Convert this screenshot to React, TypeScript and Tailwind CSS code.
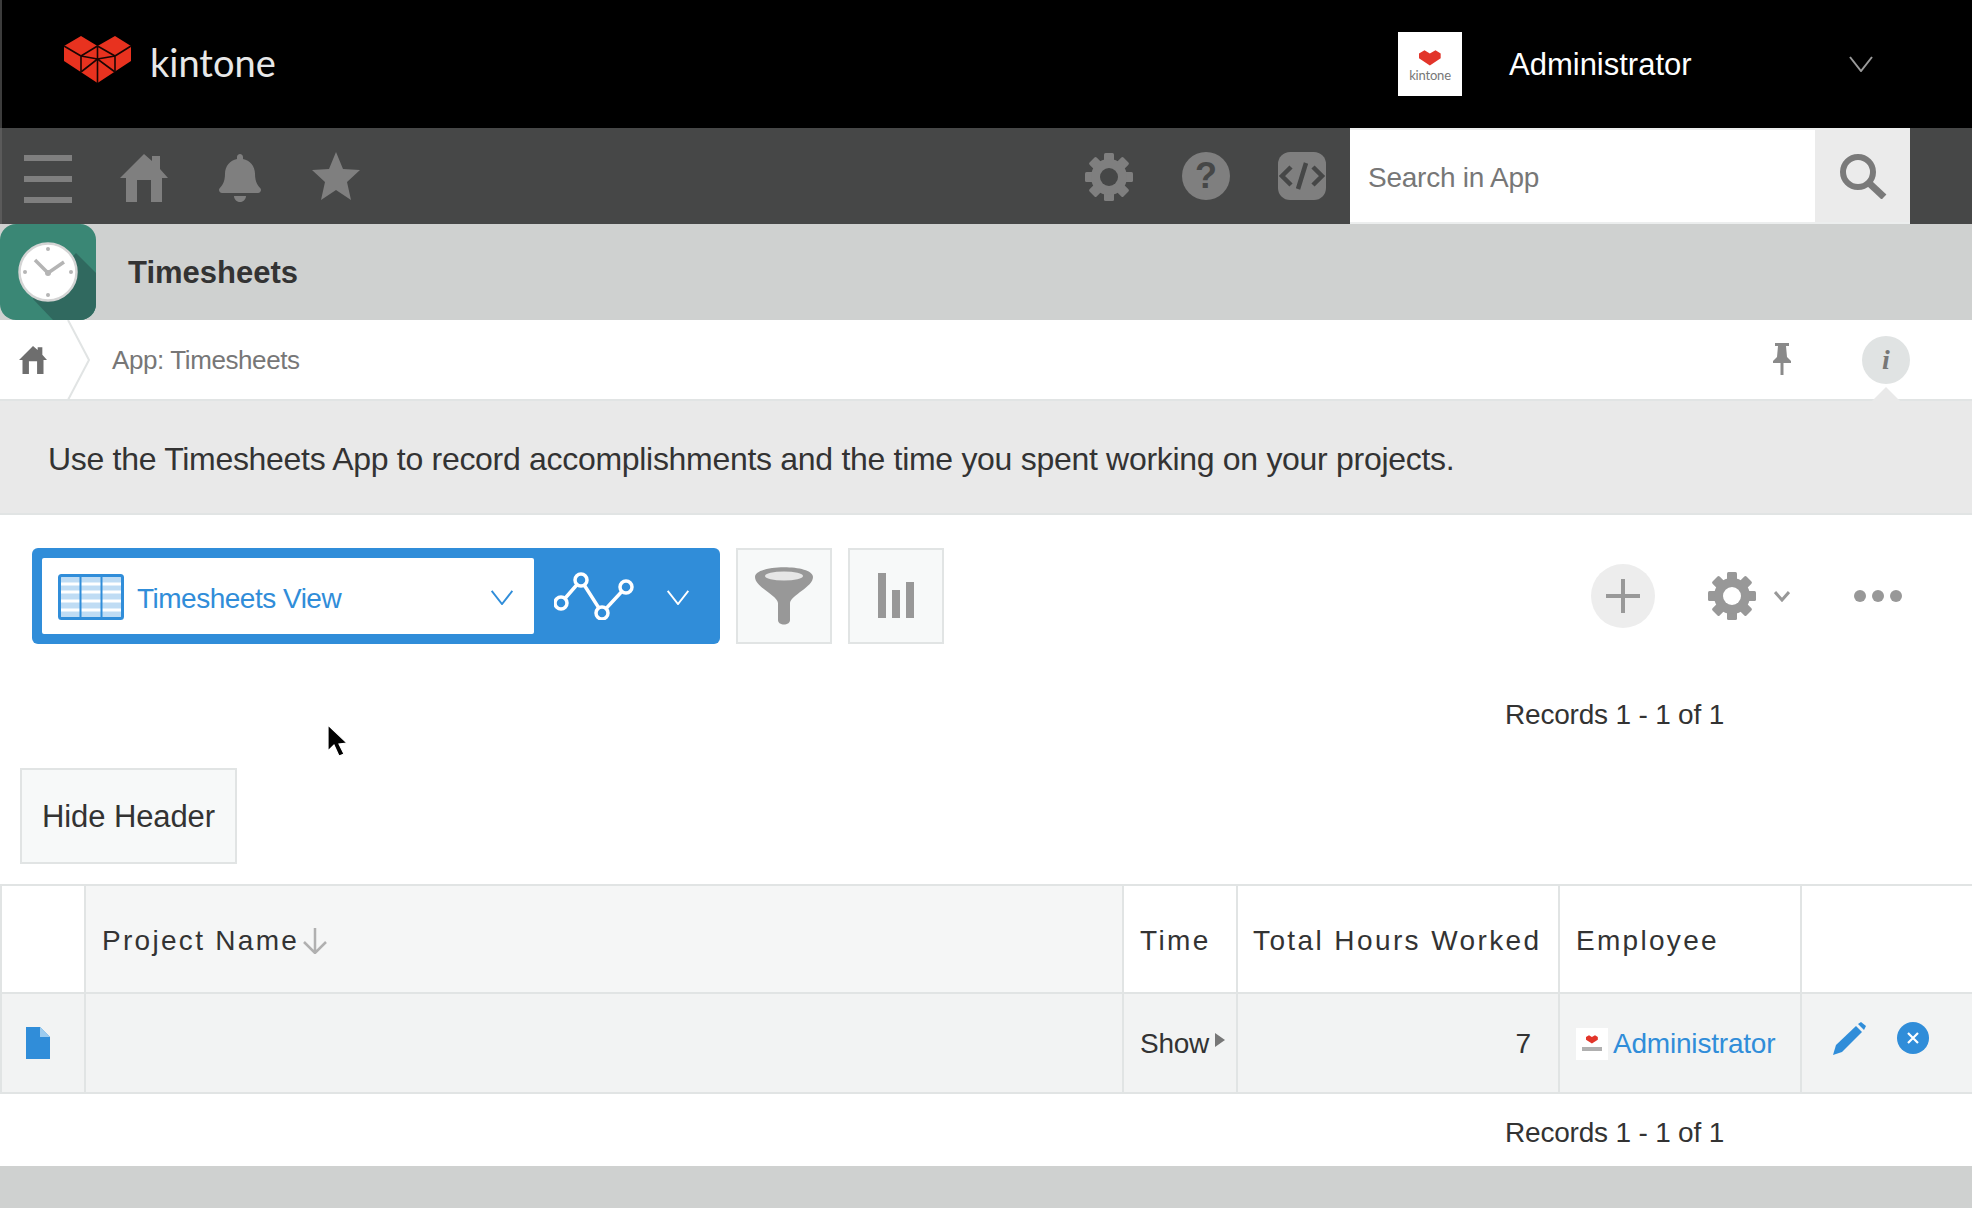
import { FaBell } from "react-icons/fa";

const sans = "font-['Liberation_Sans',Arial,sans-serif]";

function Gear({ size, color, hole }: { size: number; color: string; hole: string }) {
    return (
        <svg width={size} height={size} viewBox="0 0 48 48">
            {[0, 45, 90, 135].map((a) => (
                <rect key={a} x="19" y="0" width="10" height="48" rx="1.5" fill={color} transform={`rotate(${a} 24 24)`} />
            ))}
            <circle cx="24" cy="24" r="18" fill={color} />
            <circle cx="24" cy="24" r="9" fill={hole} />
        </svg>
    );
}

function Chevron({ w, h, color, sw = 2 }: { w: number; h: number; color: string; sw?: number }) {
    return (
        <svg width={w} height={h} viewBox="0 0 24 16">
            <path d="M1 1 L12 15 L23 1" fill="none" stroke={color} strokeWidth={sw} />
        </svg>
    );
}

function KintoneLogo() {
    return (
        <svg width="68" height="48" viewBox="0 0 68 48">
            <polygon points="17,0 33.5,10 51,0 67,10 67,25 33.5,47 0,25 0,10" fill="#e8321f" />
            <g stroke="#1a0503" strokeWidth="1.6" fill="none">
                <path d="M0 10 L17 20 L33.5 10 M17 20 V36 M33.5 10 L51 20 L67 10 M51 20 V36 M33.5 10 V47" />
                <path d="M17 36 L33.5 23 L51 36 M17 20 L33.5 23 L51 20" />
            </g>
        </svg>
    );
}

function Avatar() {
    return (
        <div className="w-[64px] h-[64px] bg-white flex flex-col items-center pt-[18px]">
            <svg width="22" height="16" viewBox="0 0 68 48">
                <polygon points="17,0 33.5,10 51,0 67,10 67,25 33.5,47 0,25 0,10" fill="#e2352a" />
            </svg>
            <span className="font-['Lato',sans-serif] text-[13px] leading-[13px] mt-[3px] text-[#777] tracking-[-0.2px]">kintone</span>
        </div>
    );
}

function ClockIcon() {
    return (
        <div className="w-[96px] h-[96px] shrink-0 rounded-[16px] overflow-hidden bg-[#3a8775]">
            <svg width="96" height="96" viewBox="0 0 96 96">
                <polygon points="76,29 96,49 96,96 53,96 33,75" fill="#30695f" />
                <circle cx="48" cy="48" r="28.5" fill="#ffffff" stroke="#d4d4d4" strokeWidth="2.5" />
                {[0, 90, 180, 270].map((a) => (
                    <circle key={a} cx="48" cy="25" r="2" fill="#b5b5b5" transform={`rotate(${a} 48 48)`} />
                ))}
                <path d="M35 36 L48 49 L64 38" fill="none" stroke="#b4b4b4" strokeWidth="3.5" />
                <circle cx="48" cy="49" r="3" fill="#b4b4b4" />
            </svg>
        </div>
    );
}

export default function App() {
    return (
        <div className={`relative w-[1972px] h-[1208px] overflow-hidden bg-white text-[#333] ${sans}`}>
            {/* black top bar */}
            <header className="h-[128px] bg-black border-l-2 border-[#3c3c3c] flex items-center">
                <div className="ml-[62px] flex items-center gap-[18px] mt-[-8px]">
                    <KintoneLogo />
                    <span className="font-['Lato',sans-serif] text-[38px] mt-[3px] text-[#e8e8e8] leading-none">kintone</span>
                </div>
                <div className="ml-auto flex items-center mr-[99px]">
                    <Avatar />
                    <span className="ml-[47px] w-[340px] text-[31px] leading-none text-white">Administrator</span>
                    <Chevron w={24} h={16} color="#9a9a9a" />
                </div>
            </header>

            {/* global nav */}
            <nav className="h-[96px] bg-[#464747] border-l-2 border-[#5a5a5a] flex items-center">
                <div className="ml-[22px] flex flex-col gap-[15px] w-[48px] mt-[6px]">
                    <div className="h-[6px] bg-[#7f7f7f]" />
                    <div className="h-[6px] bg-[#7f7f7f]" />
                    <div className="h-[6px] bg-[#7f7f7f]" />
                </div>
                <svg width="48" height="48" viewBox="0 0 48 48" className="ml-[48px] mt-[4px]">
                    <path d="M24 0 L32 7 V2 H40 V15 L48 24 H42 V48 H31 V26 H17 V48 H6 V24 H0 Z" fill="#7f7f7f" />
                </svg>
                <FaBell size={48} color="#7f7f7f" className="ml-[48px] mt-[4px]" />
                <svg width="48" height="48" viewBox="0 0 48 48" className="ml-[48px] mt-[-1px]">
                    <polygon points="24,0 31,17 48,18 35,30 39,48 24,38 9,48 13,30 0,18 17,17" fill="#7f7f7f" />
                </svg>
                <div className="ml-auto flex items-center">
                    <div className="mt-[1px]"><Gear size={48} color="#7f7f7f" hole="#464747" /></div>
                    <div className="ml-[49px] w-[48px] h-[48px] rounded-full bg-[#7f7f7f] text-[#464747] text-[36px] font-bold flex items-center justify-center leading-none">?</div>
                    <svg width="48" height="48" viewBox="0 0 48 48" className="ml-[48px] rounded-[12px] bg-[#7f7f7f]">
                        <path d="M13 15 L4 24 L13 33 M35 15 L44 24 L35 33 M28 11 L20 37" fill="none" stroke="#464747" strokeWidth="4.5" />
                    </svg>
                    <div className="ml-[24px] w-[560px] h-[96px] flex border-t-2 border-b-2 border-[#eceeee] mr-[62px]">
                        <div className="w-[465px] bg-white flex items-center pl-[18px] pt-[3px] text-[28px] tracking-[-0.25px] text-[#777]">Search in App</div>
                        <div className="flex-1 bg-[#ebebeb] flex items-center justify-center">
                            <svg width="48" height="46" viewBox="0 0 48 46">
                                <circle cx="19" cy="19" r="15" fill="none" stroke="#7a7a7a" strokeWidth="6" />
                                <path d="M30 30 L45 44" stroke="#7a7a7a" strokeWidth="7" />
                            </svg>
                        </div>
                    </div>
                </div>
            </nav>

            {/* app title */}
            <div className="h-[96px] bg-[#cfd1d0] flex items-center">
                <ClockIcon />
                <span className="ml-[32px] pt-[3px] text-[31px] font-bold text-[#333]">Timesheets</span>
            </div>

            {/* breadcrumb */}
            <div className="relative h-[81px] bg-white border-b-2 border-[#e1e4e4] flex items-center">
                <svg width="28" height="28" viewBox="0 0 48 48" className="ml-[19px]">
                    <path d="M24 0 L32 7 V2 H40 V15 L48 24 H42 V48 H31 V26 H17 V48 H6 V24 H0 Z" fill="#6e6e6e" />
                </svg>
                <svg width="24" height="80" viewBox="0 0 24 80" className="ml-[20px]">
                    <path d="M1 0 L22 40 L1 80" fill="none" stroke="#e1e4e4" strokeWidth="2" />
                </svg>
                <span className="ml-[21px] pt-[2px] text-[26px] tracking-[-0.4px] text-[#777]">App: Timesheets</span>
                <svg width="18" height="32" viewBox="0 0 18 32" className="ml-auto mb-[2px]">
                    <path d="M2 0 H16 V3 H13 L14 14 L18 18 V20 H0 V18 L4 14 L5 3 H2 Z" fill="#8a8a8a" />
                    <path d="M9 20 V32" stroke="#8a8a8a" strokeWidth="3" />
                </svg>
                <div className="ml-[71px] mr-[62px] w-[48px] h-[48px] rounded-full bg-[#e0e3e3] flex items-center justify-center font-['Liberation_Serif',serif] italic font-bold text-[28px] text-[#777]">i</div>
                <div className="absolute right-[72px] bottom-[-2px] w-0 h-0 border-x-[14px] border-x-transparent border-b-[14px] border-b-[#e9e9e9]" />
            </div>

            {/* description */}
            <div className="h-[114px] bg-[#e9e9e9] border-b-2 border-[#e1e4e4] flex items-center pl-[48px] pt-[4px] text-[32px] tracking-[-0.3px] text-[#333]">
                Use the Timesheets App to record accomplishments and the time you spent working on your projects.
            </div>

            {/* toolbar */}
            <div className="h-[96px] mt-[33px] flex items-stretch pl-[32px] pr-[70px]">
                <div className="w-[688px] bg-[#308dd9] rounded-[6px] flex items-center pl-[10px]">
                    <div className="w-[492px] h-[76px] bg-white rounded-[2px] flex items-center pl-[16px] pr-[20px]">
                        <svg width="66" height="46" viewBox="0 0 66 46" className="mt-[2px]">
                            <rect x="1.5" y="1.5" width="63" height="43" rx="2" fill="#bfdcf4" stroke="#308dd9" strokeWidth="3" />
                            <path d="M3 10 H63 M3 18 H63 M3 27 H63 M3 36 H63" stroke="#ffffff" strokeWidth="3" />
                            <path d="M22.5 3 V43 M43.5 3 V43" stroke="#308dd9" strokeWidth="2" />
                        </svg>
                        <span className="ml-[13px] pt-[5px] text-[28px] tracking-[-0.5px] text-[#308dd9]">Timesheets View</span>
                        <div className="ml-auto mt-[3px]"><Chevron w={24} h={15} color="#308dd9" /></div>
                    </div>
                    <svg width="80" height="48" viewBox="0 0 80 48" className="ml-[20px]">
                        <path d="M7 31 L27 8 L48 41 L72 15" fill="none" stroke="#ffffff" strokeWidth="3.5" />
                        {[[7, 31], [27, 8], [48, 41], [72, 15]].map(([cx, cy]) => (
                            <circle key={cx} cx={cx} cy={cy} r="6" fill="#308dd9" stroke="#ffffff" strokeWidth="3.5" />
                        ))}
                    </svg>
                    <div className="ml-[31px] mt-[3px]"><Chevron w={26} h={15} color="#ffffff" /></div>
                </div>
                <div className="ml-[16px] w-[96px] bg-[#f7f9f9] border-2 border-[#e1e4e4] flex items-center justify-center">
                    <svg width="58" height="58" viewBox="0 0 58 58">
                        <path d="M0 10 C0 -3 58 -3 58 10 C58 20 36 28 35 36 V53 C35 59 23 59 23 53 V36 C22 28 0 20 0 10 Z" fill="#989898" />
                        <ellipse cx="29" cy="9" rx="19" ry="4.5" fill="#e6e6e6" />
                    </svg>
                </div>
                <div className="ml-[16px] w-[96px] bg-[#f7f9f9] border-2 border-[#e1e4e4] flex items-end justify-center pb-[24px] gap-[6px]">
                    <div className="w-[8px] h-[45px] bg-[#989898]" />
                    <div className="w-[8px] h-[28px] bg-[#989898]" />
                    <div className="w-[8px] h-[36px] bg-[#989898]" />
                </div>
                <div className="ml-auto flex items-center">
                    <div className="w-[64px] h-[64px] rounded-full bg-[#ededed] flex items-center justify-center">
                        <svg width="34" height="34" viewBox="0 0 34 34">
                            <path d="M17 0 V34 M0 17 H34" stroke="#999" strokeWidth="4" />
                        </svg>
                    </div>
                    <div className="ml-[53px]"><Gear size={48} color="#989898" hole="#ffffff" /></div>
                    <div className="ml-[18px]">
                        <svg width="16" height="12" viewBox="0 0 16 12">
                            <path d="M1 2 L8 10 L15 2" fill="none" stroke="#989898" strokeWidth="3" />
                        </svg>
                    </div>
                    <div className="ml-[64px] flex gap-[6px]">
                        <div className="w-[12px] h-[12px] rounded-full bg-[#989898]" />
                        <div className="w-[12px] h-[12px] rounded-full bg-[#989898]" />
                        <div className="w-[12px] h-[12px] rounded-full bg-[#989898]" />
                    </div>
                </div>
            </div>

            {/* pager */}
            <div className="h-[124px] flex items-center pr-[248px] pt-[18px] justify-end text-[28px] tracking-[-0.2px]">
                Records 1 - 1 of 1
            </div>

            <div className="pl-[20px] h-[116px]">
                <button className="w-[217px] h-[96px] pt-[3px] bg-[#f7f9f9] border-2 border-[#e1e4e4] text-[31px] tracking-[-0.1px] text-[#333]">Hide Header</button>
            </div>

            {/* table */}
            <div className="grid grid-cols-[86px_1038px_114px_322px_242px_1fr] border-y-2 border-[#e1e4e4] text-[28px]">
                <div className="h-[106px] bg-white border-l-2 border-r-2 border-[#e1e4e4]" />
                <div className="h-[106px] bg-[#f5f6f6] border-r-2 border-[#e1e4e4] flex items-center pl-[16px] pt-[4px] tracking-[2.3px]">
                    Project Name
                    <svg width="24" height="26" viewBox="0 0 24 26" className="ml-[4px]">
                        <path d="M12 0 V25 M1 14 L12 25 L23 14" fill="none" stroke="#b0b0b0" strokeWidth="2.5" />
                    </svg>
                </div>
                <div className="h-[106px] border-r-2 border-[#e1e4e4] flex items-center pl-[16px] pt-[4px] tracking-[2.4px]">Time</div>
                <div className="h-[106px] border-r-2 border-[#e1e4e4] flex items-center pl-[15px] pt-[4px] tracking-[2.4px] whitespace-nowrap">Total Hours Worked</div>
                <div className="h-[106px] border-r-2 border-[#e1e4e4] flex items-center pl-[16px] pt-[4px] tracking-[2.3px]">Employee</div>
                <div className="h-[106px]" />

                <div className="col-span-6 h-[2px] bg-[#e1e4e4]" />

                <div className="h-[98px] bg-[#f2f3f3] border-l-2 border-r-2 border-[#e1e4e4] flex items-center pl-[24px]">
                    <svg width="24" height="32" viewBox="0 0 24 32">
                        <path d="M0 0 H14 L24 10 V32 H0 Z" fill="#308dd9" />
                        <path d="M14 0 L24 10 H14 Z" fill="#9ccbef" />
                    </svg>
                </div>
                <div className="h-[98px] bg-[#f2f3f3] border-r-2 border-[#e1e4e4]" />
                <div className="h-[98px] bg-[#f2f3f3] border-r-2 border-[#e1e4e4] flex items-center pl-[16px] pt-[2px] tracking-[-0.3px]">
                    Show
                    <div className="ml-[6px] mb-[8px] w-0 h-0 border-y-[7px] border-y-transparent border-l-[10px] border-l-[#777]" />
                </div>
                <div className="h-[98px] bg-[#f2f3f3] border-r-2 border-[#e1e4e4] flex items-center justify-end pr-[27px] pt-[2px]">7</div>
                <div className="h-[98px] bg-[#f2f3f3] border-r-2 border-[#e1e4e4] flex items-center pl-[16px] pt-[2px] text-[#308dd9] tracking-[-0.2px]">
                    <div className="w-[32px] h-[32px] bg-white flex flex-col items-center pt-[7px]">
                        <svg width="12" height="9" viewBox="0 0 68 48">
                            <polygon points="17,0 33.5,10 51,0 67,10 67,25 33.5,47 0,25 0,10" fill="#e2352a" />
                        </svg>
                        <div className="mt-[3px] w-[20px] h-[4px] bg-[#b0b0b0]" />
                    </div>
                    <span className="ml-[5px]">Administrator</span>
                </div>
                <div className="h-[98px] bg-[#f2f3f3] flex items-start pt-[28px] pl-[31px]">
                    <svg width="33" height="33" viewBox="0 0 33 33">
                        <path d="M0 33 L3 23 L23 4 L29 10 L9 30 Z" fill="#308dd9" />
                        <path d="M25 2 L28 0 L33 4 L31 8 Z" fill="#308dd9" />
                    </svg>
                    <div className="ml-[31px] w-[32px] h-[32px] rounded-full bg-[#308dd9] flex items-center justify-center">
                        <svg width="14" height="14" viewBox="0 0 14 14">
                            <path d="M2 2 L12 12 M12 2 L2 12" stroke="#fff" strokeWidth="2.2" />
                        </svg>
                    </div>
                </div>
            </div>

            {/* pager bottom */}
            <div className="h-[72px] flex items-center pr-[248px] pt-[6px] justify-end text-[28px] tracking-[-0.2px]">
                Records 1 - 1 of 1
            </div>
            <div className="h-[42px] bg-[#cfd1d0]" />

            {/* mouse cursor */}
            <svg width="22" height="34" viewBox="0 0 22 34" className="absolute left-[327px] top-[724px]">
                <path d="M1 1 V27 L7 21 L12 32 L17 30 L12 20 L20 19 Z" fill="#000" stroke="#fff" strokeWidth="1.2" />
            </svg>
        </div>
    );
}
